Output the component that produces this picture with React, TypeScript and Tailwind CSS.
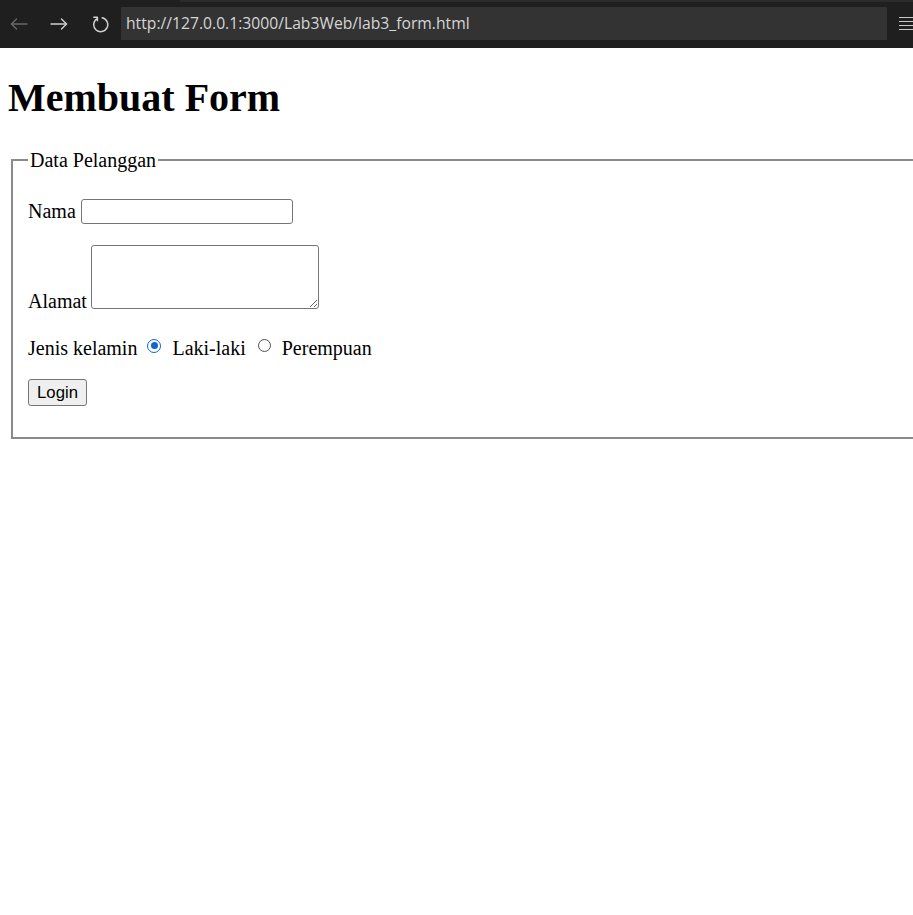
import React from "react";

function BackIcon({ color }: { color: string }) {
  return (
    <svg width="18" height="14" viewBox="0 0 18 14" fill="none" stroke={color} strokeWidth="1.4" strokeLinecap="round" strokeLinejoin="round">
      <path d="M17 7H1.5" />
      <path d="M6.5 2 1.5 7l5 5" />
    </svg>
  );
}

function ForwardIcon({ color }: { color: string }) {
  return (
    <svg width="18" height="14" viewBox="0 0 18 14" fill="none" stroke={color} strokeWidth="1.4" strokeLinecap="round" strokeLinejoin="round">
      <path d="M1 7h15.5" />
      <path d="M11.5 2l5 5-5 5" />
    </svg>
  );
}

function ReloadIcon() {
  return (
    <svg width="18" height="18" viewBox="0 0 18 18" fill="none" stroke="#cfcfcf" strokeWidth="1.5" strokeLinecap="round" strokeLinejoin="round">
      <path d="M6.2 3.6A7 7 0 1 0 11.2 2.8" />
      <path d="M2.8 2.2h3.6v3.6" />
    </svg>
  );
}

export default function App() {
  return (
    <div className="w-[913px] h-[915px] bg-white overflow-hidden">
      {/* barra del navegador */}
      <div className="h-[48px] bg-[#1f1f1f] flex flex-col">
        <div className="h-[2px] flex">
          <div className="w-[180px] shrink-0" />
          <div className="flex-1 bg-[#2b2b2b]" />
        </div>
        <div className="h-[33px] mt-[5px] flex items-center">
          <div className="w-[38px] shrink-0 flex justify-center">
            <BackIcon color="#6a6a6a" />
          </div>
          <div className="w-[42px] shrink-0 flex justify-center">
            <ForwardIcon color="#d0d0d0" />
          </div>
          <div className="w-[39px] shrink-0 flex justify-center">
            <ReloadIcon />
          </div>
          <div className="ml-[2px] w-[766px] shrink-0 h-[33px] bg-[#333333] flex items-center pl-[5px] text-[#d6d6d6] text-[15.7px] font-['Open_Sans',sans-serif] whitespace-nowrap">
            http://127.0.0.1:3000/Lab3Web/lab3_form.html
          </div>
          <div className="ml-[12px] shrink-0 flex flex-col gap-[2.5px] w-[20px]">
            <div className="h-[1.5px] bg-[#c8c8c8]" />
            <div className="h-[1.5px] bg-[#c8c8c8]" />
            <div className="h-[1.5px] bg-[#c8c8c8]" />
            <div className="h-[1.5px] bg-[#c8c8c8]" />
          </div>
        </div>
      </div>

      {/* halaman */}
      <div className="px-[8px] font-['Liberation_Serif',serif] text-black">
        <h1 className="mt-[26.8px] mb-[26.8px] text-[40px] leading-[46px] font-bold">Membuat Form</h1>

        <fieldset className="ml-[3px] w-[1000px] border-2 border-[#8a8a8a] pl-[15px] pb-[31px]">
          <legend className="px-[2px] text-[20px] leading-[23px] pt-[1px]">Data Pelanggan</legend>

          <div className="mt-[27px] flex items-end h-[25px] text-[20px]">
            <span className="leading-[23px] mb-[1px]">Nama</span>
            <input type="text" className="ml-[5px] w-[212px] h-[25px] border border-[#767676] rounded-[3px] bg-white" />
          </div>

          <div className="mt-[21px] flex items-end text-[20px]">
            <span className="leading-[23px]">Alamat</span>
            <textarea className="ml-[4px] mb-[4px] w-[228px] h-[64px] border border-[#767676] rounded-[3px] bg-white" />
          </div>

          <div className="mt-[24px] flex items-start text-[20px] leading-[23px]">
            <span>Jenis kelamin</span>
            <span className="ml-[10px] mt-[2px] w-[14px] h-[14px] rounded-full border-[1.5px] border-[#1163d4] flex items-center justify-center">
              <span className="w-[7.5px] h-[7.5px] rounded-full bg-[#1163d4]" />
            </span>
            <span className="ml-[11px]">Laki-laki</span>
            <span className="ml-[12px] mt-[2.5px] w-[13px] h-[13px] rounded-full border border-[#4f4f4f]" />
            <span className="ml-[11px]">Perempuan</span>
          </div>

          <div className="mt-[19px]">
            <button className="w-[59px] h-[27px] bg-[#efefef] border border-[#767676] rounded-[3px] text-[16.7px] font-['Liberation_Sans',sans-serif] text-black flex items-center justify-center">
              Login
            </button>
          </div>
        </fieldset>
      </div>
    </div>
  );
}
